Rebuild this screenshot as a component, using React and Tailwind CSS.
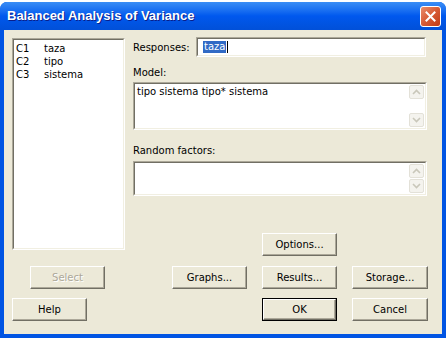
const ui = { fontFamily: '"DejaVu Sans", "Liberation Sans", sans-serif' }

function Btn({ children, def, disabled, className = '' }) {
  return (
    <div className={`h-[23px] w-[75px] shrink-0 ${def ? 'border border-black' : ''} ${className}`}>
      <div className="flex h-full w-full items-center justify-center border border-t-white border-l-white border-r-[#716f64] border-b-[#716f64] bg-[#ece9d8] shadow-[inset_-1px_-1px_0_#aca899]">
        <span className={`text-[10px] ${disabled ? 'text-[#aca899] [text-shadow:1px_1px_0_#ffffff]' : 'text-black'}`}>{children}</span>
      </div>
    </div>
  )
}

function Arrow({ up }) {
  return (
    <div className="flex h-[14px] w-[15px] items-center justify-center rounded-[2px] border border-[#e3e1d8] bg-[#f4f3ee]">
      <svg width="9" height="6" viewBox="0 0 9 6">
        <path d={up ? 'M1 5 L4.5 1.5 L8 5' : 'M1 1 L4.5 4.5 L8 1'} fill="none" stroke="#c9c7ba" strokeWidth="1.6" />
      </svg>
    </div>
  )
}

function Sunken({ className = '', children }) {
  return (
    <div className={`border border-t-[#aca899] border-l-[#aca899] border-r-white border-b-white ${className}`}>
      <div className="h-full w-full border border-t-[#716f64] border-l-[#716f64] border-r-[#f1efe2] border-b-[#f1efe2] bg-white">
        {children}
      </div>
    </div>
  )
}

function MemoBox({ h, text }) {
  return (
    <Sunken className={`w-[294px] ${h}`}>
      <div className="flex h-full">
        <div className="flex-1 pl-[2px] pt-[1px] text-[10px] leading-[13px] text-black">{text}</div>
        <div className="mr-[1px] flex flex-col justify-between py-[1px]">
          <Arrow up />
          <Arrow />
        </div>
      </div>
    </Sunken>
  )
}

export default function App() {
  const cols = [
    ['C1', 'taza'],
    ['C2', 'tipo'],
    ['C3', 'sistema'],
  ]
  return (
    <div className="h-[341px] w-[448px] overflow-hidden bg-white" style={ui}>
      <div className="mt-[2px] h-[336px] w-[446px] rounded-t-[7px] border-x-4 border-b-4 border-[#0054e3] bg-[#0054e3]">
        {/* title bar */}
        <div className="-mx-1 flex h-[28px] items-center justify-between rounded-t-[7px] bg-gradient-to-b from-[#3a8df5] via-[#0058ee] to-[#0150d8] pl-[7px] pr-[5px]">
          <span className="font-['Liberation_Sans'] text-[13px] font-bold text-white [text-shadow:1px_1px_0_#0a1e8a]">Balanced Analysis of Variance</span>
          <div className="flex h-[21px] w-[21px] items-center justify-center rounded-[3px] border border-white bg-gradient-to-br from-[#e88c6c] via-[#d75a34] to-[#c03a14]">
            <svg width="11" height="11" viewBox="0 0 11 11">
              <path d="M1.5 1.5 L9.5 9.5 M9.5 1.5 L1.5 9.5" stroke="white" strokeWidth="2" strokeLinecap="square" />
            </svg>
          </div>
        </div>

        {/* client */}
        <div className="h-[304px] bg-[#ece9d8] pt-[7px]">
          <div className="flex">
            <div className="ml-[8px] mt-[1px]">
              <Sunken className="h-[212px] w-[113px]">
                <div className="pl-[2px] pt-[2px]">
                  {cols.map(([c, n]) => (
                    <div key={c} className="flex h-[13px] items-center text-[10px] text-black">
                      <span className="w-[28px]">{c}</span>
                      <span>{n}</span>
                    </div>
                  ))}
                </div>
              </Sunken>
            </div>

            <div className="ml-[8px] w-[294px]">
              <div className="flex h-[20px] items-center">
                <span className="w-[63px] text-[10px] text-black">Responses:</span>
                <Sunken className="h-[20px] w-[230px]">
                  <div className="flex h-full items-center pl-[5px]">
                    <span className="bg-[#316ac5] px-[1px] text-[10px] leading-[12px] text-white">taza</span>
                    <span className="ml-[1px] h-[12px] w-px bg-black" />
                  </div>
                </Sunken>
              </div>

              <div className="mt-[9px] h-[13px] text-[10px] leading-[13px] text-black">Model:</div>
              <div className="mt-[3px]">
                <MemoBox h="h-[48px]" text="tipo sistema tipo* sistema" />
              </div>

              <div className="mt-[14px] h-[13px] text-[10px] leading-[13px] text-black">Random factors:</div>
              <div className="mt-[4px]">
                <MemoBox h="h-[35px]" text="" />
              </div>

              <div className="mt-[37px] flex">
                <Btn className="ml-[129px]">Options...</Btn>
              </div>
            </div>
          </div>

          <div className="mt-[10px] flex">
            <Btn disabled className="ml-[26px]">Select</Btn>
            <Btn className="ml-[67px]">Graphs...</Btn>
            <Btn className="ml-[15px]">Results...</Btn>
            <Btn className="ml-[15px] w-[76px]">Storage...</Btn>
          </div>

          <div className="mt-[9px] flex">
            <Btn className="ml-[8px]">Help</Btn>
            <Btn def className="ml-[175px]">OK</Btn>
            <Btn className="ml-[15px] w-[76px]">Cancel</Btn>
          </div>
        </div>
      </div>
    </div>
  )
}
